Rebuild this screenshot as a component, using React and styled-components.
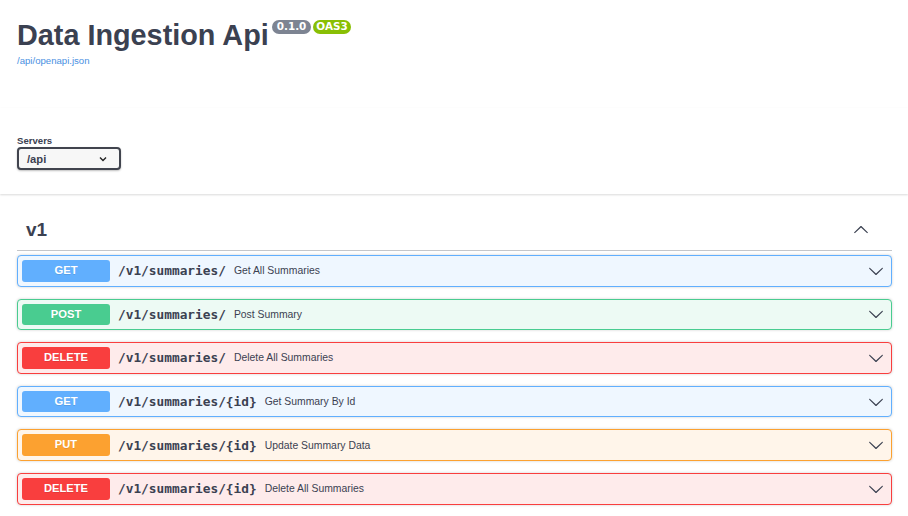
import styled, { createGlobalStyle } from "styled-components";

const GlobalStyle = createGlobalStyle`
  body {
    margin: 0;
    background: #fff;
    font-family: "Liberation Sans", Arial, sans-serif;
    color: #3b4151;
  }
`;

const Wrapper = styled.div`
  padding: 0 16px 0 17px;
`;

const Info = styled.div`
  padding-top: 19px;
  margin-bottom: 42px;
`;

const TitleRow = styled.div`
  display: flex;
  align-items: flex-start;
`;

const Title = styled.h2`
  margin: 0;
  font-size: 28.8px;
  line-height: 33px;
  font-weight: 700;
  color: #3b4151;
`;

const Badges = styled.div`
  display: flex;
  gap: 2px;
  margin: 1px 0 0 3px;
`;

const Badge = styled.span`
  display: inline-block;
  padding: 1px ${(p) => p.$pad}px;
  border-radius: 57px;
  background: ${(p) => p.$color};
  color: #fff;
  font-family: "DejaVu Sans", sans-serif;
  font-weight: 700;
  font-size: 10.4px;
  line-height: 11.5px;
`;

const SpecLink = styled.a`
  display: block;
  margin-top: 3px;
  font-size: 9.6px;
  color: #4990e2;
  text-decoration: none;
`;

const SchemeContainer = styled.div`
  background: #fff;
  box-shadow: 0 1px 2px 0 rgba(0, 0, 0, 0.15);
  padding: 27px 0 24px;
`;

const ServersTitle = styled.div`
  font-size: 9.6px;
  line-height: 11px;
  font-weight: 700;
  color: #3b4151;
  margin-bottom: 1px;
`;

const SelectBox = styled.div`
  box-sizing: border-box;
  width: 104px;
  height: 23px;
  display: flex;
  align-items: center;
  justify-content: space-between;
  padding: 0 12px 0 8px;
  border: 2px solid #41444e;
  border-radius: 4px;
  background: #f7f7f7;
  box-shadow: 0 1px 2px 0 rgba(0, 0, 0, 0.25);
  font-size: 11.2px;
  font-weight: 700;
  color: #3b4151;
`;

const Section = styled.div`
  margin-top: 16px;
`;

const TagHeader = styled.div`
  display: flex;
  align-items: center;
  justify-content: space-between;
  height: 40px;
  padding: 0 20px 0 9px;
  margin-bottom: 4px;
  border-bottom: 1px solid rgba(59, 65, 81, 0.3);
`;

const TagName = styled.h3`
  margin: 0;
  font-size: 19px;
  font-weight: 700;
  color: #3b4151;
`;

const OpBlock = styled.div`
  display: flex;
  align-items: center;
  padding: 4px;
  margin-bottom: 12px;
  border: 1px solid ${(p) => p.$color};
  border-radius: 4px;
  background: ${(p) => p.$bg};
  box-shadow: 0 0 3px rgba(0, 0, 0, 0.19);
`;

const Method = styled.span`
  flex: none;
  width: 88px;
  height: 21.6px;
  line-height: 21.6px;
  text-align: center;
  border-radius: 3px;
  background: ${(p) => p.$color};
  color: #fff;
  font-size: 11.2px;
  font-weight: 700;
  text-shadow: 0 1px 0 rgba(0, 0, 0, 0.1);
`;

const Path = styled.span`
  padding: 0 8px;
  font-family: "DejaVu Sans Mono", monospace;
  font-size: 12.8px;
  font-weight: 700;
  color: #3b4151;
`;

const Description = styled.span`
  flex: 1;
  font-size: 10.4px;
  color: #3b4151;
`;

const Arrow = styled.svg`
  flex: none;
  width: 16px;
  height: 16px;
  margin-right: 3px;
  fill: #3b4151;
  transform: ${(p) => (p.$up ? "rotate(180deg)" : "none")};
`;

const SmallArrow = styled.svg`
  width: 8px;
  height: 8px;
`;

const COLORS = {
  GET: { color: "#61affe", bg: "#eff7ff" },
  POST: { color: "#49cc90", bg: "#edfaf4" },
  DELETE: { color: "#f93e3e", bg: "#feebeb" },
  PUT: { color: "#fca130", bg: "#fff5ea" },
};

const ops = [
  { method: "GET", path: "/v1/summaries/", summary: "Get All Summaries" },
  { method: "POST", path: "/v1/summaries/", summary: "Post Summary" },
  { method: "DELETE", path: "/v1/summaries/", summary: "Delete All Summaries" },
  { method: "GET", path: "/v1/summaries/{id}", summary: "Get Summary By Id" },
  { method: "PUT", path: "/v1/summaries/{id}", summary: "Update Summary Data" },
  { method: "DELETE", path: "/v1/summaries/{id}", summary: "Delete All Summaries" },
];

const ArrowIcon = ({ up }) => (
  <Arrow viewBox="0 0 20 20" $up={up}>
    <path d="M17.418 6.109c.272-.268.709-.268.979 0s.271.701 0 .969l-7.908 7.83c-.27.268-.707.268-.979 0l-7.908-7.83c-.27-.268-.27-.701 0-.969.271-.268.709-.268.979 0L10 13.25l7.418-7.141z" />
  </Arrow>
);

const App = () => {
  return (
    <>
      <GlobalStyle />
      <Wrapper>
        <Info>
          <TitleRow>
            <Title>Data Ingestion Api</Title>
            <Badges>
              <Badge $color="#7d8492" $pad={5}>0.1.0</Badge>
              <Badge $color="#89bf04" $pad={3}>OAS3</Badge>
            </Badges>
          </TitleRow>
          <SpecLink href="#">/api/openapi.json</SpecLink>
        </Info>
      </Wrapper>

      <SchemeContainer>
        <Wrapper>
          <ServersTitle>Servers</ServersTitle>
          <SelectBox>
            <span>/api</span>
            <SmallArrow viewBox="0 0 8 8">
              <path d="M1 2.5 L4 5.5 L7 2.5" fill="none" stroke="#222" strokeWidth="1.4" />
            </SmallArrow>
          </SelectBox>
        </Wrapper>
      </SchemeContainer>

      <Wrapper>
        <Section>
          <TagHeader>
            <TagName>v1</TagName>
            <ArrowIcon up />
          </TagHeader>
          {ops.map((op, i) => (
            <OpBlock key={i} $color={COLORS[op.method].color} $bg={COLORS[op.method].bg}>
              <Method $color={COLORS[op.method].color}>{op.method}</Method>
              <Path>{op.path}</Path>
              <Description>{op.summary}</Description>
              <ArrowIcon />
            </OpBlock>
          ))}
        </Section>
      </Wrapper>
    </>
  );
};

export default App;
